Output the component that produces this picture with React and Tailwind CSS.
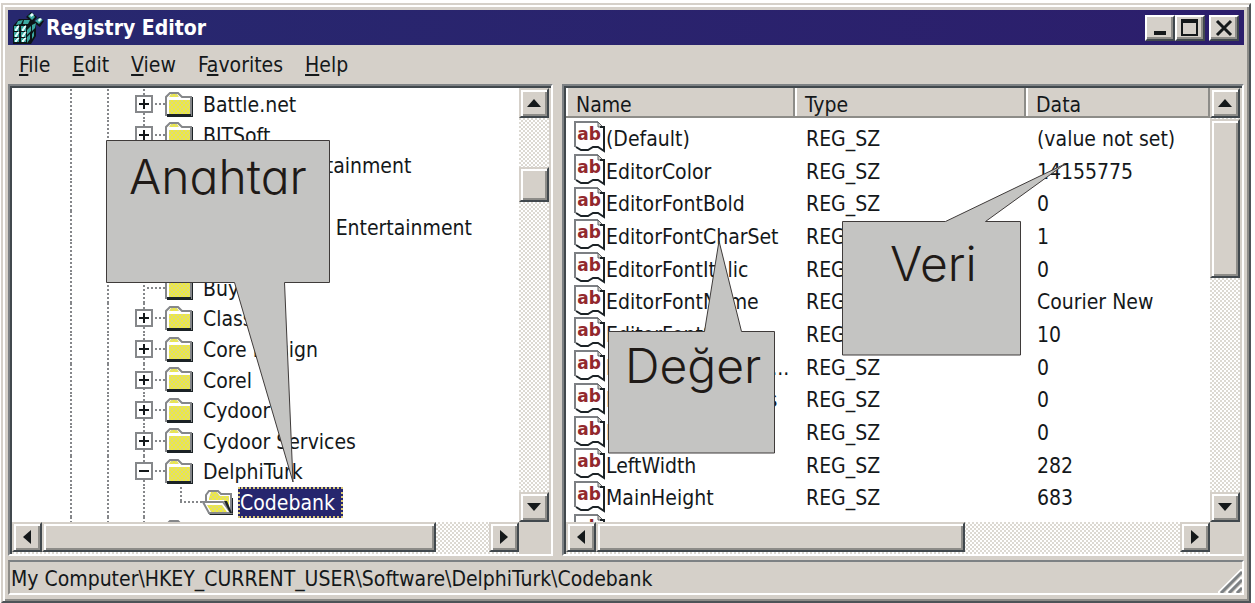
const DITHER = "bg-[conic-gradient(#dcd9d2_25%,#ffffff_0_50%,#dcd9d2_0_75%,#ffffff_0)] bg-[length:4px_4px]";
const DOTS_V = "bg-[repeating-linear-gradient(180deg,#85878a_0_2px,#ffffff_2px_4px)]";
const DOTS_H = "bg-[repeating-linear-gradient(90deg,#85878a_0_2px,#ffffff_2px_4px)]";
const RAISED =
  "bg-[#d5d0c9] border-2 border-t-[#d5d0c9] border-l-[#d5d0c9] border-r-[#41484d] border-b-[#41484d] shadow-[inset_2px_2px_0_#ffffff,inset_-2px_-2px_0_#8d8c88]";

const tree = [
  { label: "Battle.net", box: "+" },
  { label: "BITSoft", box: "+" },
  { label: "Bizarre Entertainment", box: "+" },
  { label: "" },
  { label: "Brains Digital Entertainment", box: "+" },
  { label: "" },
  { label: "Buy" },
  { label: "Classes", box: "+" },
  { label: "Core Design", box: "+" },
  { label: "Corel", box: "+" },
  { label: "Cydoor", box: "+" },
  { label: "Cydoor Services", box: "+" },
  { label: "DelphiTurk", box: "-" },
  { label: "Codebank", child: true },
  { label: "" },
];

const values = [
  ["(Default)", "(value not set)"],
  ["EditorColor", "14155775"],
  ["EditorFontBold", "0"],
  ["EditorFontCharSet", "1"],
  ["EditorFontItalic", "0"],
  ["EditorFontName", "Courier New"],
  ["EditorFontSize", "10"],
  ["EditorFontStrikeO...", "0"],
  ["EditorSmartTables", "0"],
  ["LeftHeight", "0"],
  ["LeftWidth", "282"],
  ["MainHeight", "683"],
  ["MainLeft", ""],
];

function AppIcon() {
  return (
    <svg width="32" height="32" viewBox="0 0 32 32" aria-hidden="true">
      <path d="M1 14 7 7h11l6 3v14l-5 8H1z" fill="#0c1416" />
      <path d="M14 5 19 0l6 5-4 6zM22 11l5-6 5 4-4 6z" fill="#0c1416" />
      <path d="m16 4 4-3 3 4-3 3zM23 9l4-3 4 2-4 4z" fill="#3ba7a0" />
      <path d="m18 3 2-2 2 2-3 2zM26 8l2-2 2 1-3 3z" fill="#e8ffff" />
      <path d="m6 9 5-1-2 4-5 1zM12 8h6l-2 4h-5zM20 13l4-2-1 5-3 3z" fill="#3ba7a0" />
      <path d="M2 14h5v5H2zM9 14h5v5H9zM2 20h5v5H2zM9 20h5v5H9zM2 26h5v4H2zM9 26h5v4H9zM15 25l3-3v5l-3 4zM15 18l4-4v5l-4 4zM20 22l2-3v5l-2 3z" fill="#3ba7a0" />
      <path d="M3 18l3-4h1l-3 5zM10 18l3-4h1l-3 5zM3 24l3-4h1l-3 5zM10 24l3-4h1l-3 5zM3 29l3-3h1l-3 4zM10 29l3-3h1l-3 4z" fill="#e8ffff" stroke="#e8ffff" strokeWidth="1" />
    </svg>
  );
}

function Folder() {
  return (
    <svg width="28" height="25" viewBox="0 0 28 25" className="shrink-0" aria-hidden="true">
      <defs>
        <pattern id="weave" width="4" height="4" patternUnits="userSpaceOnUse">
          <rect width="4" height="4" fill="#f0ec3a" />
          <rect width="2" height="2" fill="#dcd97c" />
          <rect x="2" y="2" width="2" height="2" fill="#dcd97c" />
        </pattern>
      </defs>
      <path d="M2 23h24V5h2v20H2z" fill="#1b2226" />
      <path d="M1 23V5l4-4h8l4 4h9v18z" fill="#ffffff" stroke="#85878a" strokeWidth="2" />
      <path d="M4 5 6 2h6l2 3z" fill="url(#weave)" />
      <path d="M4 8h21v14H4z" fill="url(#weave)" />
      <path d="M2 23h24" stroke="#1b2226" strokeWidth="2" />
    </svg>
  );
}

function OpenFolder() {
  return (
    <svg width="32" height="25" viewBox="0 0 32 25" className="shrink-0" aria-hidden="true">
      <path d="M6 23h24V8h1v17H8z" fill="#1b2226" />
      <path d="M4 11V5l3-4h9l3 3h10v19H8z" fill="#ffffff" stroke="#85878a" strokeWidth="2" />
      <path d="M7 8 9 2h6l3 4h9v14L22 10H7z" fill="url(#weave)" />
      <path d="M1 12h20l8 11H7z" fill="#ffffff" stroke="#85878a" strokeWidth="2" />
      <path d="M5 15h15l5 7H9z" fill="url(#weave)" />
      <path d="M22 11h3l5 12h-2z" fill="#1b2226" />
    </svg>
  );
}

function StringIcon() {
  return (
    <svg width="32" height="32" viewBox="0 0 32 32" className="shrink-0" aria-hidden="true">
      <path d="M1 26V1h23l5 5v22l-5-2h-5l-5 3H8z" fill="#ffffff" />
      <path d="M1 26V1h23" fill="none" stroke="#7c7f83" strokeWidth="2" />
      <path d="m24 1 5 5h-5z" fill="#d5d0c9" stroke="#5c6064" strokeWidth="1" />
      <path d="M26 6h4v24l-6-4h-5l-5 3H7l-5-3" fill="none" stroke="#1b2226" strokeWidth="2" />
      <text x="15" y="19" textAnchor="middle" fontFamily="DejaVu Sans" fontWeight="700" fontSize="17" fill="#92282d">
        ab
      </text>
    </svg>
  );
}

function Expander({ kind, name }) {
  return (
    <button aria-label={(kind === "+" ? "Expand " : "Collapse ") + name} className="relative flex size-[18px] shrink-0 items-center justify-center border-2 border-[#85878a] bg-white">
      <svg width="10" height="10" viewBox="0 0 10 10" aria-hidden="true">
        <path d={kind === "+" ? "M0 5h10M5 0v10" : "M0 5h10"} stroke="#14181a" strokeWidth="2" />
      </svg>
    </button>
  );
}

function TreeRow({ row }) {
  return (
    <li role="treeitem" aria-selected={!!row.child} className="flex min-h-0 flex-1 items-center">
      <span className={"w-[2px] self-stretch " + DOTS_V} />
      <span className="w-[35px] shrink-0" />
      <span className={"w-[2px] self-stretch " + DOTS_V} />
      <span className="w-[26px] shrink-0" />
      {row.child ? (
        <>
          <span className="flex w-[45px] shrink-0 self-stretch pl-2">
            <span className={"w-[2px] " + DOTS_V} />
          </span>
          <span className="flex w-[22px] shrink-0 flex-col self-stretch">
            <span className={"w-[2px] flex-1 " + DOTS_V} />
            <span className={"h-[2px] " + DOTS_H} />
            <span className="flex-1" />
          </span>
          <OpenFolder />
          <span className="ml-1 border-2 border-dotted border-[#d9c777] bg-[#26266e] pt-[2px] pr-[6px] leading-[25px] text-white">{row.label}</span>
        </>
      ) : (
        <>
          <span className="relative flex w-[30px] shrink-0 items-center self-stretch">
            <span className={"absolute inset-y-0 left-2 w-[2px] " + DOTS_V} />
            {row.box ? <Expander kind={row.box} name={row.label} /> : <span className="w-[10px]" />}
            <span className={"ml-[2px] h-[2px] flex-1 " + DOTS_H} />
          </span>
          <Folder />
          <span className="ml-[10px] pt-[2px] leading-7 whitespace-nowrap">{row.label}</span>
        </>
      )}
    </li>
  );
}

const ARROWS = {
  up: "M8 4 15 12H1z",
  down: "M8 12 1 4h14z",
  left: "M4 8 12 1v14z",
  right: "M12 8 4 1v14z",
};

function Arrow({ dir }) {
  return (
    <button aria-label={"Scroll " + dir} className={"flex size-[30px] shrink-0 items-center justify-center " + RAISED}>
      <svg width="16" height="16" viewBox="0 0 16 16" aria-hidden="true">
        <path d={ARROWS[dir]} fill="#14181a" />
      </svg>
    </button>
  );
}

function VScroll({ before, thumb }) {
  return (
    <div className={"flex w-[30px] shrink-0 flex-col " + DITHER}>
      <Arrow dir="up" />
      <div className={before} />
      <div className={thumb + " " + RAISED} />
      <div className="flex-1" />
      <Arrow dir="down" />
    </div>
  );
}

function HScroll({ thumb }) {
  return (
    <div className="flex h-8 shrink-0 bg-[#d5d0c9]">
      <div className={"flex flex-1 items-stretch " + DITHER}>
        <Arrow dir="left" />
        <div className={thumb + " h-[30px] " + RAISED} />
        <div className="flex-1" />
        <Arrow dir="right" />
      </div>
      <div className="w-[30px]" />
    </div>
  );
}

const PANE =
  "flex flex-col border-2 border-t-[#7d8184] border-l-[#7d8184] border-r-white border-b-white bg-[#d5d0c9] shadow-[inset_2px_2px_0_#41484d] pt-[2px] pl-[2px] pr-[2px]";

function Th({ children, className }) {
  return (
    <th className={"bg-white p-0 pb-[3px] text-left font-normal " + className}>
      <div className="h-[30px] border-r-2 border-b-2 border-[#8d8c88] bg-[#d5d0c9] pl-[10px] leading-[34px] shadow-[inset_2px_0_0_#ffffff]">{children}</div>
    </th>
  );
}

const menus = [
  ["", "F", "ile"],
  ["", "E", "dit"],
  ["", "V", "iew"],
  ["F", "a", "vorites"],
  ["", "H", "elp"],
];

const CAP = "flex h-[26px] items-center justify-center bg-[#d5d0c9] border-2 border-t-white border-l-white border-r-[#41484d] border-b-[#41484d] shadow-[inset_-2px_-2px_0_#8d8c88]";

function Callout({ text, place, points, w, h, textClass }) {
  return (
    <div className={"absolute " + place}>
      <svg width={w} height={h} viewBox={`0 0 ${w} ${h}`} className="block" aria-hidden="true">
        <polygon points={points} fill="#c4c4c2" stroke="#3f3b3a" strokeWidth="1" />
      </svg>
      <p className={"absolute font-['Inter',sans-serif] text-[48px] leading-[58px] font-[350] text-[#1f1a17] [font-feature-settings:'cv11'] " + textClass}>{text}</p>
    </div>
  );
}

export default function App() {
  return (
    <div className="relative h-screen overflow-hidden bg-white pt-[3px] pr-1 pl-px font-['DejaVu_Sans_Condensed','Noto_Sans',sans-serif] text-[21px] text-[#14181a]">
      <div className="flex h-full flex-col border-2 border-t-[#d5d0c9] border-l-[#d5d0c9] border-r-[#4d5357] border-b-[#4d5357] bg-[#d5d0c9] pt-[5px] pr-[5px] pb-[6px] pl-[5px] shadow-[inset_2px_2px_0_#ffffff,inset_-2px_-2px_0_#8d8c88]">
        <header className="flex h-[35px] shrink-0 items-center bg-linear-to-r from-[#27286f] to-[#2c1e6c] pr-[5px] pl-1">
          <AppIcon />
          <h1 className="ml-[2px] flex-1 pt-[2px] font-bold text-white">Registry Editor</h1>
          <button aria-label="Minimize" className={"w-[30px] " + CAP}>
            <svg width="20" height="18" viewBox="0 0 20 18" aria-hidden="true"><path d="M4 14h12" stroke="#14181a" strokeWidth="4" /></svg>
          </button>
          <button aria-label="Maximize" className={"w-[30px] " + CAP}>
            <svg width="20" height="20" viewBox="0 0 20 20" aria-hidden="true"><path d="M2 3h15v14H2z" fill="none" stroke="#14181a" strokeWidth="2" /><path d="M1 3h17" stroke="#14181a" strokeWidth="4" /></svg>
          </button>
          <button aria-label="Close" className={"ml-1 w-[30px] " + CAP}>
            <svg width="20" height="18" viewBox="0 0 20 18" aria-hidden="true"><path d="m3 2 14 14M17 2 3 16" stroke="#14181a" strokeWidth="3" /></svg>
          </button>
        </header>

        <nav className="flex h-[39px] shrink-0 items-center gap-[22px] pt-[3px] pl-[11px]">
          {menus.map(([a, b, c]) => (
            <button key={a + b + c}>
              {a}<span className="underline decoration-2 underline-offset-2">{b}</span>{c}
            </button>
          ))}
        </nav>

        <main className="flex min-h-0 flex-1 gap-[9px]">
          <section className={"w-[545px] shrink-0 " + PANE} aria-label="Keys">
            <div className="flex min-h-0 flex-1">
              <div className="min-w-0 flex-1 overflow-hidden bg-white">
                <ul role="tree" className="flex h-[460px] flex-col pt-px pl-[58px]">
                  {tree.map((row, i) => (
                    <TreeRow key={i} row={row} />
                  ))}
                </ul>
              </div>
              <VScroll before="h-[49px]" thumb="h-[35px]" />
            </div>
            <HScroll thumb="w-[394px]" />
          </section>

          <section className={"min-w-0 flex-1 " + PANE} aria-label="Values">
            <div className="flex min-h-0 flex-1">
              <div className="min-w-0 flex-1 overflow-hidden bg-white">
                <table className="h-[458px] w-full table-fixed border-collapse">
                  <thead>
                    <tr className="h-[33px]">
                      <Th className="w-[229px]">Name</Th>
                      <Th className="w-[231px]">Type</Th>
                      <Th className="">Data</Th>
                    </tr>
                  </thead>
                  <tbody>
                    {values.map(([name, data]) => (
                      <tr key={name} className="leading-7">
                        <td className="p-0">
                          <div className="flex h-[32px] items-center pl-2 whitespace-nowrap">
                            <StringIcon />
                            <span className="pt-[3px]">{name}</span>
                          </div>
                        </td>
                        <td className="p-0 pt-[3px] pl-[11px]">REG_SZ</td>
                        <td className="p-0 pt-[3px] pl-[11px]">{data}</td>
                      </tr>
                    ))}
                  </tbody>
                </table>
              </div>
              <VScroll before="h-px" thumb="h-[159px]" />
            </div>
            <HScroll thumb="w-[369px]" />
          </section>
        </main>

        <footer className="mt-1 flex h-[35px] shrink-0 items-center justify-between border-2 border-t-[#7d8184] border-l-[#8d8c88] border-r-white border-b-white pl-px">
          <span className="pt-[3px] leading-7">My Computer\HKEY_CURRENT_USER\Software\DelphiTurk\Codebank</span>
          <svg width="24" height="24" viewBox="0 0 24 24" className="self-end" aria-hidden="true">
            <path d="M0 24 24 0M8 24 24 8M16 24l8-8" stroke="#ffffff" strokeWidth="2" />
            <path d="M3 24 24 3M11 24l13-13M19 24l5-5" stroke="#7d8184" strokeWidth="3" />
          </svg>
        </footer>
      </div>

      <Callout text="Anahtar" place="top-[140px] left-[106px]" w={225} h={344} points="0.5,0.5 223.5,0.5 223.5,142.5 178.5,142.5 187,342 128.5,142.5 0.5,142.5" textClass="top-[8px] left-[23px]" />
      <Callout text="Değer" place="top-[240px] left-[608px]" w={168} h={214} points="0.5,91.5 96.5,91.5 111,1 133.5,91.5 166.5,91.5 166.5,213 0.5,213" textClass="top-[97px] left-[17px]" />
      <Callout text="Veri" place="top-[163px] left-[842px]" w={225} h={193} points="0.5,58.5 103.5,58.5 223,1 143.5,58.5 178.5,58.5 178.5,192 0.5,192" textClass="top-[72px] left-[48px]" />
    </div>
  );
}
